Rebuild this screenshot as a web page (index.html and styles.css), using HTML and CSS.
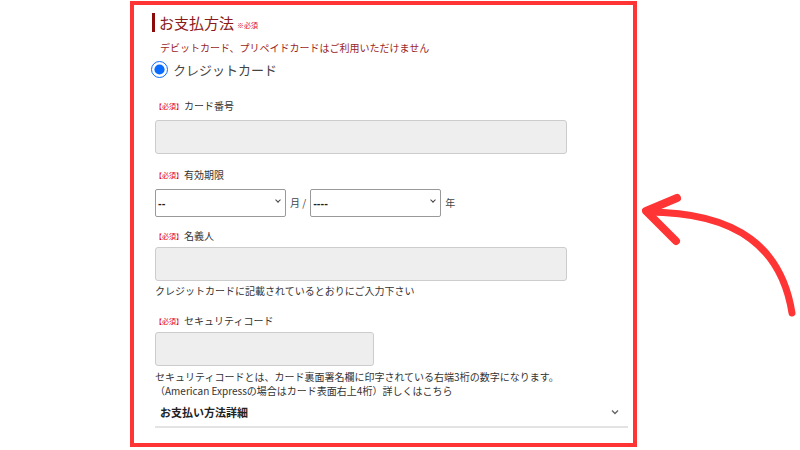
FILE: index.html
```html
<!DOCTYPE html>
<html lang="ja">
<head>
    <meta charset="UTF-8">
    <meta name="viewport" content="width=device-width, initial-scale=1.0">
    <title>お支払方法</title>
    <link rel="stylesheet" href="styles.css">
</head>
<body>
    <div class="frame">
        <h2 class="heading">お支払方法<span class="req-note">※必須</span></h2>
        <p class="notice">デビットカード、プリペイドカードはご利用いただけません</p>
        <label class="radio-row">
            <input type="radio" name="pay" checked>
            <span>クレジットカード</span>
        </label>

        <div class="field-label"><span class="tag">【必須】</span>カード番号</div>
        <input type="text" class="text-input">

        <div class="field-label mt-14"><span class="tag">【必須】</span>有効期限</div>
        <div class="expiry">
            <div class="select-wrap">
                <select><option>--</option></select>
            </div>
            <span class="unit">月 /</span>
            <div class="select-wrap">
                <select><option>----</option></select>
            </div>
            <span class="unit">年</span>
        </div>

        <div class="field-label mt-13"><span class="tag">【必須】</span>名義人</div>
        <input type="text" class="text-input small-gap">
        <p class="help">クレジットカードに記載されているとおりにご入力下さい</p>

        <div class="field-label mt-16"><span class="tag">【必須】</span>セキュリティコード</div>
        <input type="text" class="text-input short small-gap">
        <p class="help two-line">セキュリティコードとは、カード裏面署名欄に印字されている右端3桁の数字になります。</p>
        <p class="help two-line second">（American Expressの場合はカード表面右上4桁）詳しくはこちら</p>

        <div class="details">
            <span>お支払い方法詳細</span>
            <svg class="chev" width="8" height="6" viewBox="0 0 8 6"><path d="M1 1.5 L4 4.5 L7 1.5" fill="none" stroke="#666" stroke-width="1.4"/></svg>
        </div>
    </div>

    <!-- annotation arrow -->
    <svg class="arrow" width="800" height="450" viewBox="0 0 800 450">
        <path d="M792 313 C782 250 740 212 647 212" fill="none" stroke="#ff3535" stroke-width="7" stroke-linecap="round"/>
        <path d="M677 198 L646 211 L676 241" fill="none" stroke="#ff3535" stroke-width="8" stroke-linecap="round" stroke-linejoin="round"/>
    </svg>
</body>
</html>
```

FILE: styles.css
```css
body {
    margin: 0;
    background-color: white;
    font-family: "Noto Sans CJK JP", "Liberation Sans", sans-serif;
    color: #333;
    width: 800px;
    height: 450px;
    overflow: hidden;
    position: relative;
}
.frame {
    box-sizing: border-box;
    width: 507px;
    height: 446px;
    margin: 1px 0 0 130px;
    border: 4px solid #ff3535;
    padding: 8px 5px 0 21px;
}
.heading {
    margin: 0 0 0 -3px;
    padding-left: 4px;
    border-left: 3px solid #8b0b0b;
    height: 19px;
    line-height: 19px;
    font-size: 15px;
    font-weight: normal;
    color: #8b1a1a;
}
.req-note {
    font-size: 7px;
    color: #e0102a;
    margin-left: 3px;
    vertical-align: 1px;
}
.notice {
    margin: 9px 0 0 5px;
    font-size: 10px;
    line-height: 14px;
    color: #9a2626;
}
.radio-row {
    display: flex;
    align-items: center;
    margin: 5px 0 0 -4px;
    height: 18px;
    font-size: 13px;
    color: #444;
}
.radio-row input {
    width: 17px;
    height: 17px;
    margin: 0 5px 0 0;
    accent-color: #0a6cff;
}
.field-label {
    display: flex;
    align-items: center;
    height: 14px;
    margin-top: 21px;
    font-size: 10px;
    line-height: 14px;
    color: #333;
}
.mt-13 {
    margin-top: 13px;
}
.mt-14 {
    margin-top: 14px;
}
.mt-16 {
    margin-top: 16px;
}
.tag {
    font-size: 7px;
    color: #e60012;
    margin-right: 1px;
}
.text-input {
    display: block;
    box-sizing: border-box;
    width: 412px;
    height: 34px;
    margin-top: 7px;
    background-color: #eeeeee;
    border: 1px solid #cccccc;
    border-radius: 3px;
}
.small-gap {
    margin-top: 4px;
}
.text-input.short {
    width: 219px;
}
.expiry {
    display: flex;
    align-items: center;
    margin-top: 6px;
    height: 28px;
}
.select-wrap {
    position: relative;
    width: 131px;
    height: 28px;
}
.select-wrap::after {
    content: "";
    position: absolute;
    right: 6px;
    top: 10px;
    width: 3px;
    height: 3px;
    border-right: 1.3px solid #444;
    border-bottom: 1.3px solid #444;
    transform: rotate(45deg);
    pointer-events: none;
}
.select-wrap select {
    appearance: none;
    box-sizing: border-box;
    width: 100%;
    height: 100%;
    padding: 0 0 0 2px;
    border: 1px solid #999;
    border-radius: 2px;
    background: white;
    font-family: "Liberation Sans", sans-serif;
    font-size: 11px;
    font-weight: bold;
    color: #222;
}
.unit {
    font-size: 10px;
    color: #444;
    margin: 0 4px;
}
.help {
    margin: 3px 0 0 0;
    font-size: 10px;
    line-height: 14px;
    color: #333;
}
.help.two-line {
    margin-top: 4px;
}
.help.second {
    margin-top: 0;
}
.details {
    display: flex;
    justify-content: space-between;
    align-items: center;
    margin: 7px 0 0 0;
    padding: 0 9px 7px 5px;
    height: 14px;
    border-bottom: 2px solid #e3e3e3;
    font-size: 11px;
    font-weight: bold;
    color: #222;
}
.arrow {
    position: absolute;
    left: 0;
    top: 0;
    pointer-events: none;
}
```
